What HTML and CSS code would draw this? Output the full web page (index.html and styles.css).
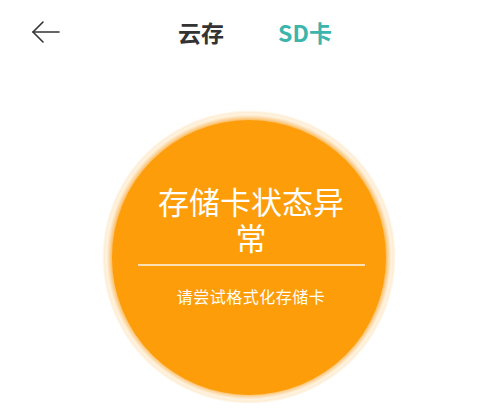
FILE: index.html
```html
<!DOCTYPE html>
<html lang="zh-CN">
<head>
<meta charset="utf-8">
<link rel="stylesheet" href="styles.css">
</head>
<body>
<header class="topbar">
  <div class="back">
    <svg width="28" height="22" viewBox="0 0 28 22" fill="none" stroke="#333" stroke-width="1.6" stroke-linecap="round" stroke-linejoin="round">
      <path d="M11 1 L1 11 L11 21"/>
      <path d="M1 11 H27"/>
    </svg>
  </div>
  <nav class="tabs">
    <span class="tab">云存</span>
    <span class="tab active">SD卡</span>
  </nav>
  <div></div>
</header>
<main class="content">
  <div class="halo">
    <div class="circle">
      <div class="title">存储卡状态异常</div>
      <div class="divider"></div>
      <div class="sub">请尝试格式化存储卡</div>
    </div>
  </div>
</main>
</body>
</html>
```
FILE: styles.css
```css
* { box-sizing: border-box; }
html, body {
  margin: 0;
  padding: 0;
  background: #ffffff;
  font-family: "Noto Sans CJK SC", "Noto Sans", sans-serif;
}
.topbar {
  height: 64px;
  display: grid;
  grid-template-columns: 1fr auto 1fr;
  align-items: center;
}
.back {
  padding-left: 32px;
  display: flex;
  align-items: center;
}
.back svg { display: block; }
.tabs {
  display: flex;
  gap: 54px;
  padding-left: 10px;
  align-items: center;
}
.tab {
  font-size: 23px;
  font-weight: 700;
  color: #333333;
  line-height: 30px;
}
.tab.active { color: #3cb5ad; }
.content {
  display: flex;
  justify-content: center;
  padding-top: 46px;
  padding-right: 2px;
}
.halo {
  width: 294px;
  height: 294px;
  border-radius: 50%;
  display: flex;
  align-items: center;
  justify-content: center;
  background: radial-gradient(circle at center,
    rgba(251, 185, 90, 1) 0,
    rgba(251, 190, 100, 1) 137px,
    rgba(252, 214, 160, 0.85) 140px,
    rgba(254, 236, 208, 0.6) 142.5px,
    rgba(252, 222, 175, 0.55) 144.5px,
    rgba(255, 255, 255, 0) 147px);
}
.circle {
  width: 274px;
  height: 275px;
  border-radius: 50%;
  background: #fe9d0a;
  display: flex;
  flex-direction: column;
  align-items: center;
  padding-top: 63px;
  padding-left: 4px;
}
.title {
  width: 200px;
  text-align: center;
  color: #ffffff;
  font-size: 31px;
  line-height: 36px;
}
.divider {
  width: 227px;
  height: 2px;
  background: #fde1b4;
  margin-top: 9px;
}
.sub {
  margin-top: 19px;
  color: #ffffff;
  font-size: 16px;
  line-height: 22px;
  letter-spacing: 0.5px;
}
```
